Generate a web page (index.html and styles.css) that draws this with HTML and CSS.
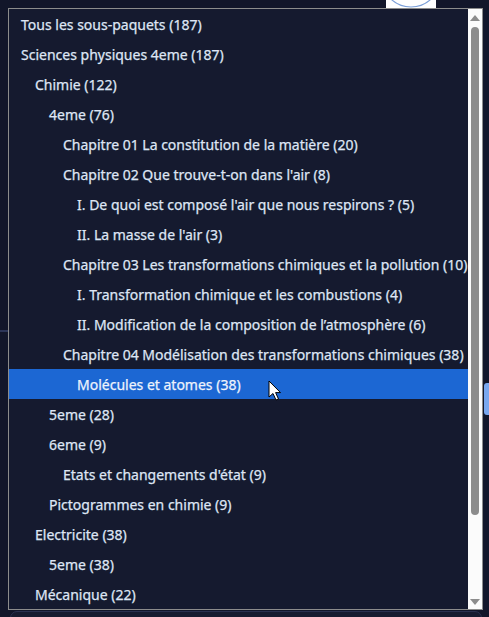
FILE: index.html
```html
<!DOCTYPE html>
<html lang="fr">
<head>
<meta charset="utf-8">
<title>Sous-paquets</title>
<link rel="stylesheet" href="styles.css">
</head>
<body>
<div class="bg-button"><svg width="50" height="8" viewBox="0 0 50 8"><circle cx="25" cy="-22.3" r="29.3" fill="none" stroke="#7b9fd8" stroke-width="1.2"/></svg></div>
<div class="bg-left-line"></div>
<div class="bg-right-tab"></div>
<div class="bg-bottom"></div>
<div class="popup">
  <ul class="list">
    <li class="row l0">Tous les sous-paquets (187)</li>
    <li class="row l0">Sciences physiques 4eme (187)</li>
    <li class="row l1">Chimie (122)</li>
    <li class="row l2">4eme (76)</li>
    <li class="row l3">Chapitre 01 La constitution de la matière (20)</li>
    <li class="row l3">Chapitre 02 Que trouve-t-on dans l'air (8)</li>
    <li class="row l4">I. De quoi est composé l'air que nous respirons ? (5)</li>
    <li class="row l4">II. La masse de l'air (3)</li>
    <li class="row l3">Chapitre 03 Les transformations chimiques et la pollution (10)</li>
    <li class="row l4">I. Transformation chimique et les combustions (4)</li>
    <li class="row l4">II. Modification de la composition de l’atmosphère (6)</li>
    <li class="row l3">Chapitre 04 Modélisation des transformations chimiques (38)</li>
    <li class="row l4 selected">Molécules et atomes (38)</li>
    <li class="row l2">5eme (28)</li>
    <li class="row l2">6eme (9)</li>
    <li class="row l3">Etats et changements d'état (9)</li>
    <li class="row l2">Pictogrammes en chimie (9)</li>
    <li class="row l1">Electricite (38)</li>
    <li class="row l2">5eme (38)</li>
    <li class="row l1">Mécanique (22)</li>
  </ul>
  <div class="scrollbar">
    <div class="arrow up"></div>
    <div class="thumb"></div>
    <div class="arrow down"></div>
  </div>
</div>
<svg class="cursor" width="14" height="22" viewBox="0 0 14 22"><path d="M1 1 L1 17 L5 13.5 L8 20 L10.5 19 L7.6 12.6 L12.5 12.6 Z" fill="#ffffff" stroke="#000000" stroke-width="1" stroke-linejoin="round"/></svg>
</body>
</html>
```
FILE: styles.css
```css
html, body {
  margin: 0;
  padding: 0;
}
body {
  width: 489px;
  height: 617px;
  overflow: hidden;
  background: #12162a;
  position: relative;
  font-family: "Noto Sans", "DejaVu Sans", sans-serif;
  font-size: 14px;
  padding: 8px 0 0 8px;
  box-sizing: border-box;
}
.popup {
  position: relative;
  z-index: 1;
  width: 475px;
  height: 602px;
  box-sizing: border-box;
  border: 1px solid #8c8c8c;
  background: #151a2f;
  display: flex;
}
.list {
  list-style: none;
  margin: 0;
  padding: 0;
  flex: 1;
  min-width: 0;
}
.row {
  box-sizing: border-box;
  height: 30px;
  padding-top: 1px;
  line-height: 29px;
  color: #dfe6f5;
  -webkit-text-stroke: 0.25px currentColor;
  white-space: nowrap;
  padding-left: 12px;
}
.l1 { padding-left: 26px; }
.l2 { padding-left: 40px; }
.l3 { padding-left: 54px; }
.l4 { padding-left: 68px; }
.selected {
  background: #1c67d3;
  color: #eef3fc;
}
.scrollbar {
  width: 14px;
  background: #fbfbfb;
  display: flex;
  flex-direction: column;
  align-items: center;
}
.arrow {
  width: 0;
  height: 0;
  border-left: 5px solid transparent;
  border-right: 5px solid transparent;
}
.arrow.up {
  margin-top: 6px;
  border-bottom: 6px solid #8c8c8c;
}
.arrow.down {
  margin-bottom: 4px;
  border-top: 6px solid #8c8c8c;
}
.thumb {
  width: 8px;
  margin-top: 6px;
  height: 488px;
  border-radius: 4px;
  background: #8c8c8c;
  margin-bottom: auto;
}
.bg-button {
  position: absolute;
  left: 386px;
  top: 0;
  width: 50px;
  height: 8px;
  background: #ffffff;
}
.bg-button svg { display: block; }
.bg-left-line {
  position: absolute;
  left: 0;
  top: 330px;
  width: 8px;
  height: 2px;
  background: #2c3558;
}
.bg-right-tab {
  position: absolute;
  left: 484px;
  top: 383px;
  width: 5px;
  height: 32px;
  background: #7aa8f0;
  border-radius: 3px 0 0 3px;
}
.bg-bottom {
  position: absolute;
  left: 10px;
  top: 611px;
  width: 470px;
  height: 12px;
  border: 1px solid #2a3050;
  border-radius: 8px;
  background: #171b30;
}
.cursor {
  position: absolute;
  left: 268px;
  top: 380px;
  z-index: 5;
}
```
